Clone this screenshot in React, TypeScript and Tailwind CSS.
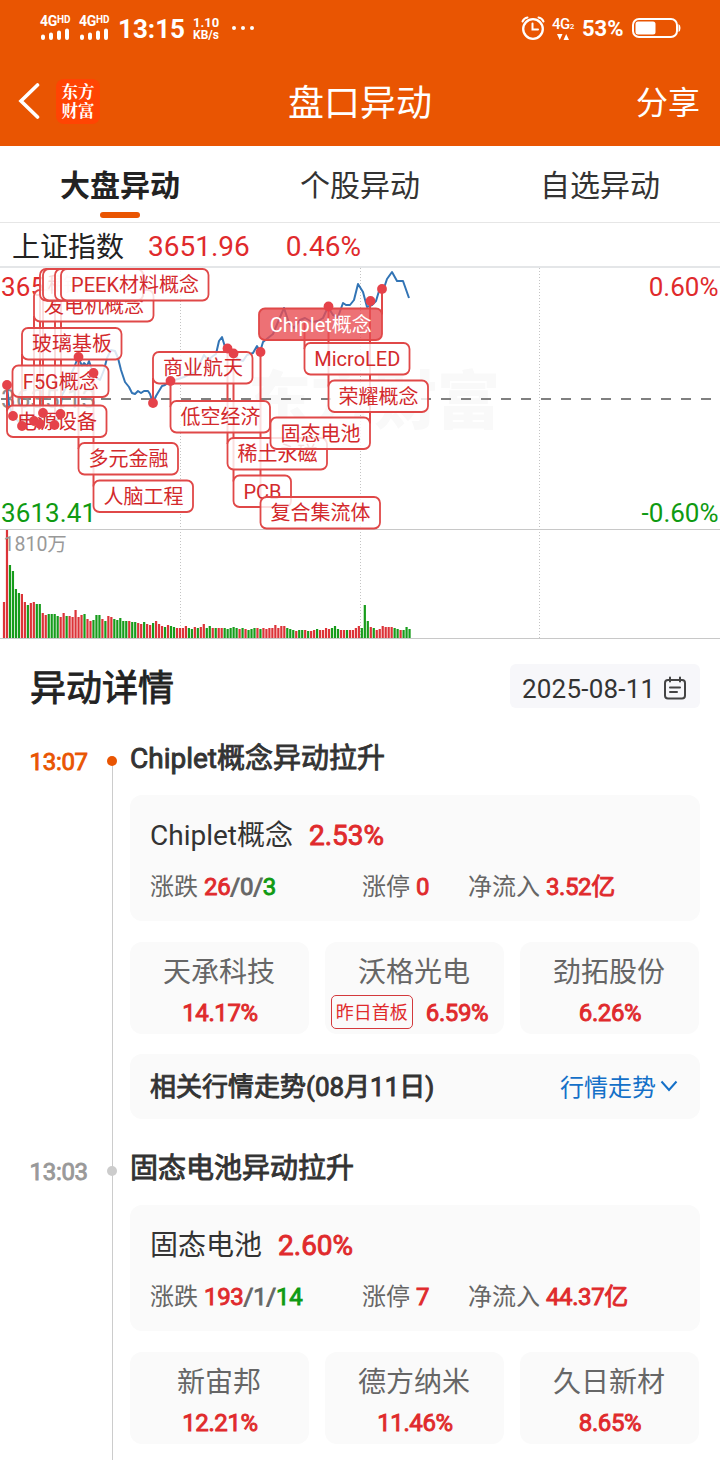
import clsx from "clsx";

const RED = "#e04848";

// [height, r(ed) | g(reen)] one entry per bar of the volume chart
const VOLUMES =
  "36r 108r 73g 67g 49g 45g 44r 36r 33g 35r 36r 34g 34g 25r 23r 24g 24g 24g 22g 21r 25r 22g 22r 21r 28r 21r 23r 24g 19r 17r 18g 23g 23g 19r 17g 22r 21r 19g 18g 20g 17g 17g 17r 16g 16g 15r 14r 16g 14r 13r 15g 17r 14r 12r 11g 13r 12g 11g 10r 10r 10r 12r 10g 9g 11r 10g 11r 14r 10g 12g 10r 10g 10r 10r 10g 9g 10g 11g 10g 9r 10g 9r 8g 9g 10g 10r 9g 10r 9r 10r 10r 13r 10r 12r 12r 10g 9g 8g 7r 8g 8g 8r 7g 7r 8r 9g 8r 8r 10r 9r 10g 12g 9g 8r 8r 8g 8r 8r 10r 12r 10g 33g 17g 11r 10g 8r 9r 12r 11r 11r 11r 10g 9g 8r 8g 11g 9g"
    .split(" ")
    .map((v) => ({ height: parseInt(v), up: v.endsWith("r") }));

const PRICE_LINE =
  "7,385 9,405 13,416 18,421 22,426 28,418 34,420 39,424 43,413 48,420 54,425 60,414 62,395 66,388 70,376 74,368 78,357 82,366 84,363 87,366 89,361 93,373 97,378 100,380 104,370 107,358 111,350 115,351 118,358 121,370 125,382 129,387 132,393 135,394 138,391 141,393 144,391 148,391 150,394 153,403 156,396 159,391 162,386 165,385 170,381 178,379 184,377 190,374 196,372 200,363 204,355 208,360 213,356 216,354 219,341 222,337 225,347 227,349 233,353 238,359 243,361 247,355 253,353 257,346 260,352 263,342 268,338 273,334 278,322 284,308 289,323 294,328 300,320 305,318 312,322 318,321 323,318 328,307 333,315 338,317 343,303 346,305 350,305 354,300 358,284 363,292 367,307 372,305 376,301 379,291 384,288 387,279 392,272 397,281 403,281 409,298";

type Tag = {
  text: string;
  x: number;
  y: number;
  w: number;
  dot: [number, number];
  right?: boolean;
  active?: boolean;
};

const TAGS: Tag[] = [
  { text: "电源设备", x: 7, y: 405.5, w: 99.5, dot: [7, 385] },
  { text: "F5G概念", x: 12.5, y: 365.5, w: 96, dot: [13, 416] },
  { text: "玻璃基板", x: 22, y: 328, w: 99.5, dot: [22, 426] },
  { text: "发电机概念", x: 34, y: 290, w: 119.5, dot: [34, 421] },
  { text: "稀土概念", x: 40, y: 269, w: 95, dot: [40, 424] },
  { text: "钛白粉", x: 43, y: 269, w: 100, dot: [43, 413] },
  { text: "", x: 55, y: 269, w: 88, dot: [54.5, 425] },
  { text: "PEEK材料概念", x: 61, y: 269, w: 147.5, dot: [60.5, 414] },
  { text: "多元金融", x: 78.5, y: 443, w: 99.5, dot: [78.5, 357] },
  { text: "人脑工程", x: 93.5, y: 480.5, w: 99.5, dot: [93.5, 373] },
  { text: "商业航天", x: 153, y: 352, w: 99.5, dot: [153, 403] },
  { text: "低空经济", x: 170.5, y: 401, w: 99.5, dot: [170.5, 381] },
  { text: "稀土永磁", x: 227.5, y: 438, w: 99.5, dot: [227.5, 348.5] },
  { text: "PCB", x: 233.5, y: 475.5, w: 57.5, dot: [233.5, 353.5] },
  { text: "复合集流体", x: 260.5, y: 497, w: 119.5, dot: [260.5, 352] },
  { text: "MicroLED", x: 304.5, y: 343, w: 105, dot: [304.5, 321] },
  { text: "荣耀概念", x: 328.5, y: 380.5, w: 99.5, dot: [328.5, 306.5] },
  { text: "固态电池", x: 270.5, y: 417.5, w: 99.5, dot: [370.5, 301], right: true },
  { text: "Chiplet概念", x: 259, y: 308.5, w: 123, dot: [382, 289], right: true, active: true },
];

// the pole runs from the dot to the nearest edge of its tag
function Pole({ tag }: { tag: Tag }) {
  const x = tag.right ? tag.x + tag.w : tag.x;
  const edge = tag.dot[1] < tag.y ? tag.y + 6 : tag.y + 26;
  return <line x1={x} x2={x} y1={tag.dot[1]} y2={edge} stroke={RED} strokeWidth={2} />;
}

function TagBox({ tag }: { tag: Tag }) {
  const { text, x, y, w, active } = tag;
  return (
    <g>
      <rect
        x={x}
        y={y}
        width={w}
        height={31.5}
        rx={6}
        fill={active ? "#e84e52" : "#fff"}
        fillOpacity={active ? 0.8 : 0.82}
        stroke={RED}
        strokeWidth={1.8}
      />
      <text
        x={x + w / 2 + 0.3}
        y={y + 23.3}
        textAnchor="middle"
        fontSize={20}
        fill={active ? "#fff" : "#d3292c"}
      >
        {text}
      </text>
    </g>
  );
}

function Chart() {
  return (
    <svg viewBox="0 266 720 374" className="block h-[374px] w-full">
      <line x1={0} x2={720} y1={267} y2={267} stroke="#e4e6e8" strokeWidth={2} />
      <text x={248} y={423} fontSize={63} fontWeight={900} fill="#f9f9f9">
        东方财富
      </text>
      {[180.5, 360.5, 539.5].map((x) => (
        <line key={x} x1={x} x2={x} y1={268} y2={638} stroke="#c4c4c4" strokeDasharray="1 2" />
      ))}
      <line x1={0} x2={720} y1={529.5} y2={529.5} stroke="#c8c8c8" />
      <line x1={0} x2={720} y1={638.5} y2={638.5} stroke="#c8c8c8" />
      <line x1={1} x2={712} y1={399} y2={399} stroke="#808080" strokeWidth={2} strokeDasharray="10 10" />

      <g fontSize={26}>
        <text x={1} y={296} textLength={95} fill="#e02a2c">3656.85</text>
        <text x={1} y={408} textLength={95} fill="#8e8e8e">3635.13</text>
        <text x={1} y={522} textLength={95} fill="#0f9a12">3613.41</text>
        <text x={718.5} y={296} textAnchor="end" fill="#e02a2c">0.60%</text>
        <text x={718.5} y={522} textAnchor="end" fill="#0f9a12">-0.60%</text>
      </g>

      <polyline points={PRICE_LINE} fill="none" stroke="#3274b5" strokeWidth={2} strokeLinejoin="round" />

      {VOLUMES.map((v, i) => (
        <rect
          key={i}
          x={2.9 + i * 2.982}
          y={638 - v.height}
          width={2.2}
          height={v.height}
          fill={v.up ? "#dc3338" : "#179c1b"}
        />
      ))}
      <text x={3.5} y={551} fontSize={19.5} fill="#999">1810万</text>

      {TAGS.map((tag, i) => (
        <Pole key={i} tag={tag} />
      ))}
      {TAGS.map((tag, i) => (
        <TagBox key={i} tag={tag} />
      ))}
      {TAGS.filter((tag) => tag.text !== "MicroLED").map((tag, i) => (
        <circle key={i} cx={tag.dot[0]} cy={tag.dot[1]} r={4.9} fill="#e5424a" />
      ))}
    </svg>
  );
}

function Signal() {
  return (
    <div className="flex w-[32px] flex-col">
      <div className="flex text-[14px] leading-[13px] font-bold tracking-[-0.3px] whitespace-nowrap">
        4G<span className="text-[10px] leading-[10px] tracking-normal">HD</span>
      </div>
      <svg viewBox="0 0 30 13" className="h-[13px] w-[30px]" stroke="#fff" strokeWidth={4} strokeLinecap="round">
        <path d="M3 8.5v1.500M11 6.500v3.500M19 4.500v5.500M27 2.500v7.500" />
      </svg>
    </div>
  );
}

function StatusBar() {
  return (
    <div className="flex h-[56px] items-center justify-between pr-[39px] pl-[40px]">
      <div className="flex items-center">
        <div className="flex gap-[7px]">
          <Signal />
          <Signal />
        </div>
        <span className="ml-[7px] w-[67px] pt-0.5 text-[26px] leading-[30px] font-bold whitespace-nowrap">13:15</span>
        <div className="ml-[8px] w-[30px] pt-0.5 text-[12px] leading-[13px] font-bold whitespace-nowrap">
          <p className="text-[13px]">1.10</p>
          <p>KB/s</p>
        </div>
        <svg viewBox="0 0 24 4" className="ml-[8px] h-1 w-6" fill="#fff">
          <circle cx={3} cy={2} r={2} />
          <circle cx={12} cy={2} r={2} />
          <circle cx={21} cy={2} r={2} />
        </svg>
      </div>
      <div className="flex items-center">
        <svg viewBox="0 0 24 24" className="h-6 w-6" fill="none" stroke="#fff" strokeWidth={2.3} strokeLinecap="round">
          <circle cx={12} cy={13} r={9.8} />
          <path d="M11.500 7.500v6H17M1.500 5.500Q3 2 6.500 1.500M22.500 5.500Q21 2 17.500 1.500" strokeWidth={2} />
        </svg>
        <div className="ml-[6px] flex w-[24px] flex-col items-center">
          <p className="text-[15px] leading-[14px] font-medium tracking-[-0.5px] whitespace-nowrap">
            4G<span className="text-[8px]">2</span>
          </p>
          <svg viewBox="0 0 12 6" className="h-[6px] w-3" fill="#fff">
            <path d="M0 0h5.500L2.800 6zM6.500 6H12L9.200 0z" />
          </svg>
        </div>
        <span className="ml-[7px] w-[42px] pt-0.5 text-[22px] leading-[26px] font-bold whitespace-nowrap">53%</span>
        <svg viewBox="0 0 49 20" className="ml-[8px] h-5 w-[49px]">
          <rect x={1} y={1} width={44} height={18} rx={6} fill="none" stroke="#fff" strokeWidth={2} />
          <rect x={3.5} y={3.5} width={20} height={13} rx={2.5} fill="#fff" />
          <path d="M46.500 6q2 1 2 4t-2 4z" fill="#fff" />
        </svg>
      </div>
    </div>
  );
}

function Header() {
  return (
    <header className="h-[146px] bg-[#e95502] text-white">
      <StatusBar />
      <div className="grid h-[90px] grid-cols-3 items-center pr-5 pl-[18px]">
        <div className="flex items-center">
          <svg viewBox="0 0 22 36" className="h-9 w-[22px]" fill="none" stroke="#fff" strokeWidth={3.6}>
            <path d="M19.500 2 3 18l16.500 16" strokeLinecap="round" />
          </svg>
          <div className="ml-[16px] flex h-[45px] w-[44px] flex-col items-center justify-center rounded-lg bg-[#ff4403] font-[Noto_Serif_CJK_SC,Noto_Sans_CJK_SC,sans-serif] text-[16.500px] leading-[19px] font-bold">
            <span>东方</span>
            <span>财富</span>
          </div>
        </div>
        <h1 className="pt-1.5 pl-0.5 text-center text-[36px] leading-[44px]">盘口异动</h1>
        <span className="pt-1 text-right text-[32px] leading-[40px]">分享</span>
      </div>
    </header>
  );
}

function Tabs() {
  return (
    <nav className="grid h-[77px] grid-cols-3 border-b border-[#e6e6e6] text-center text-[30px] leading-[80px] text-[#333]">
      {["大盘异动", "个股异动", "自选异动"].map((tab, i) => (
        <div key={tab} className={clsx("relative h-[76px]", i === 0 && "font-bold text-[#222]")}>
          {tab}
          {i === 0 && (
            <span className="absolute bottom-[4px] left-1/2 h-[6px] w-10 -translate-x-1/2 rounded-full bg-[#e95502]" />
          )}
        </div>
      ))}
    </nav>
  );
}

type Event = {
  time: string;
  name: string;
  pct: string;
  counts: [string, string, string];
  limit: string;
  inflow: string;
  stocks: { name: string; pct: string; badge?: string }[];
};

const EVENTS: Event[] = [
  {
    time: "13:07",
    name: "Chiplet概念",
    pct: "2.53%",
    counts: ["26", "0", "3"],
    limit: "0",
    inflow: "3.52亿",
    stocks: [
      { name: "天承科技", pct: "14.17%" },
      { name: "沃格光电", pct: "6.59%", badge: "昨日首板" },
      { name: "劲拓股份", pct: "6.26%" },
    ],
  },
  {
    time: "13:03",
    name: "固态电池",
    pct: "2.60%",
    counts: ["193", "1", "14"],
    limit: "7",
    inflow: "44.37亿",
    stocks: [
      { name: "新宙邦", pct: "12.21%" },
      { name: "德方纳米", pct: "11.46%" },
      { name: "久日新材", pct: "8.65%" },
    ],
  },
];

// thickened regular weight, keeps the regular glyph widths
const THICK = "[-webkit-text-stroke:0.9px_currentColor]";

function EventItem({ event, latest }: { event: Event; latest: boolean }) {
  return (
    <section className="flex h-[410px]">
      <div
        className={clsx(
          "w-[112px] pl-[29.500px] text-[24px] leading-[46px] tracking-[-0.3px]",
          THICK,
          latest ? "text-[#e95502]" : "text-[#999]",
        )}
      >
        {event.time}
      </div>
      {/* Timeline */}
      <div className="relative w-[18px]">
        <span className={clsx("absolute left-0 w-px bg-[#ccc]", latest ? "top-[22px] bottom-0" : "inset-y-0")} />
        <span
          className={clsx(
            "absolute top-[17px] -left-[5px] h-[10px] w-[10px] rounded-full",
            latest ? "bg-[#e95502]" : "bg-[#ccc]",
          )}
        />
      </div>

      <div className="w-[570px]">
        <h3 className={clsx("h-[56px] text-[28px] leading-[40px] text-[#333]", THICK)}>{event.name}异动拉升</h3>

        <div className="h-[126px] rounded-xl bg-[#fafafa] px-5 pt-[21px]">
          <div className="flex h-[40px] items-center gap-4 text-[28px] leading-[40px] text-[#333]">
            {event.name}
            <span className={clsx("text-[#e02a2c]", THICK)}>{event.pct}</span>
          </div>
          <div className="flex pt-[14px] text-[24px] leading-[34px] text-[#666]">
            <p className="w-[212px]">
              涨跌{" "}
              <span className={clsx("tracking-[-0.3px]", THICK)}>
                <span className="text-[#e02a2c]">{event.counts[0]}</span>/{event.counts[1]}/
                <span className="text-[#0f9a12]">{event.counts[2]}</span>
              </span>
            </p>
            <p className="w-[106px]">
              涨停 <span className={clsx("text-[#e02a2c]", THICK)}>{event.limit}</span>
            </p>
            <p>
              净流入 <span className={clsx("tracking-[-0.4px] text-[#e02a2c]", THICK)}>{event.inflow}</span>
            </p>
          </div>
        </div>

        {/* Stocks */}
        <div className="mt-[21px] grid w-[569px] grid-cols-3 gap-4">
          {event.stocks.map((stock) => (
            <div key={stock.name} className="h-[92px] rounded-xl bg-[#fafafa] pt-[11px] text-center">
              <p className="-ml-px text-[28px] leading-[40px] text-[#666]">{stock.name}</p>
              <div className="-mt-[3px] flex h-[44px] items-center justify-center gap-3 text-[24px] text-[#e02a2c]">
                {stock.badge && (
                  <span className="-ml-2.5 h-[34px] rounded-[5px] border border-[#d3393c] px-1 text-[18px] leading-[33px]">
                    {stock.badge}
                  </span>
                )}
                <span className={clsx("pt-px pl-px tracking-[-0.4px]", THICK)}>{stock.pct}</span>
              </div>
            </div>
          ))}
        </div>

        <div className="mt-5 flex h-[65px] items-center justify-between rounded-xl bg-[#fafafa] px-5 pt-0.5">
          <span className={clsx("text-[26px] text-[#333]", THICK)}>相关行情走势(08月11日)</span>
          <span className="flex items-center gap-1 text-[24px] text-[#1470c8]">
            行情走势
            <svg viewBox="0 0 18 12" className="mr-0.5 -mt-1 h-3 w-[18px]" fill="none" stroke="currentColor" strokeWidth={2}>
              <path d="m1.500 1.500 7.500 8.500 7.500-8.500" />
            </svg>
          </span>
        </div>
      </div>
    </section>
  );
}

export default function App() {
  return (
    <main className="h-[1460px] w-[720px] overflow-hidden bg-white font-[Roboto,Noto_Sans_CJK_SC,sans-serif]">
      <Header />
      <Tabs />

      {/* Index quote */}
      <div className="flex h-[43px] items-center pl-3 text-[28px] leading-[43px] text-[#e02a2c]">
        <span className="pt-1.5 text-[#222]">上证指数</span>
        <span className="ml-6 pt-1">3651.96</span>
        <span className="ml-9 pt-1">0.46%</span>
      </div>
      <Chart />

      <div className="flex h-[99px] items-center justify-between pr-5 pb-2 pl-[30px]">
        <h2 className={clsx("pt-1.5 text-[36px] text-[#222]", THICK)}>异动详情</h2>
        <div className="flex h-[44px] items-center rounded-md bg-[#f7f7fa] px-3 text-[26px] text-[#333]">
          <span className="w-[141px] pt-2 tracking-[0.2px] whitespace-nowrap">2025-08-11</span>
          <svg viewBox="0 0 24 24" className="mr-px mt-1 h-6 w-6" fill="none" stroke="#444" strokeWidth={2} strokeLinecap="round">
            <rect x={2} y={4} width={20} height={18.5} rx={3} />
            <path d="M7 1.500v4M17 1.500v4M7 11.500h10M7 16h7" />
          </svg>
        </div>
      </div>

      {EVENTS.map((event, i) => (
        <EventItem key={event.time} event={event} latest={i === 0} />
      ))}
    </main>
  );
}
